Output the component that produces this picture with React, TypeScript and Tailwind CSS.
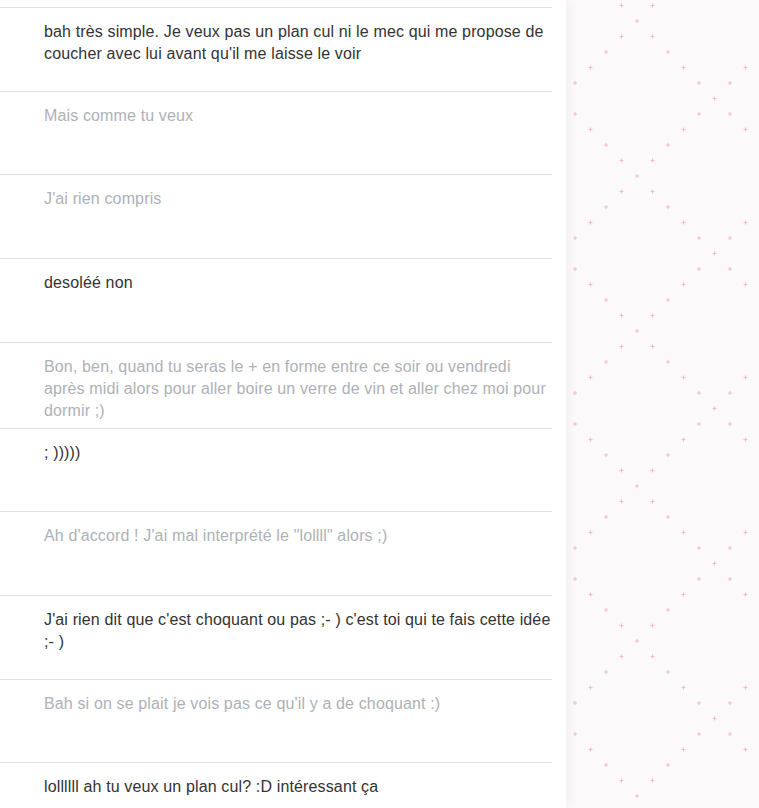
import React from 'react';

interface Message {
  text: string;
  mine: boolean;
}

const messages: Message[] = [
  { text: "bah très simple. Je veux pas un plan cul ni le mec qui me propose de coucher avec lui avant qu'il me laisse le voir", mine: true },
  { text: 'Mais comme tu veux', mine: false },
  { text: "J'ai rien compris", mine: false },
  { text: 'desoléé non', mine: true },
  { text: 'Bon, ben, quand tu seras le + en forme entre ce soir ou vendredi après midi alors pour aller boire un verre de vin et aller chez moi pour dormir ;)', mine: false },
  { text: '; )))))', mine: true },
  { text: 'Ah d\'accord ! J\'ai mal interprété le "lollll" alors ;)', mine: false },
  { text: "J'ai rien dit que c'est choquant ou pas ;- ) c'est toi qui te fais cette idée ;- )", mine: true },
  { text: "Bah si on se plait je vois pas ce qu'il y a de choquant :)", mine: false },
  { text: 'lollllll ah tu veux un plan cul? :D intéressant ça', mine: true },
];

// dots along both diagonals of a 155px tile
const STEP = 15.5;
const dots: [number, number][] = [];
for (let t = 1; t < 10; t++) {
  dots.push([t * STEP, t * STEP]);
  if (t !== 5) dots.push([155 - t * STEP, t * STEP]);
}
dots.push([0, 0], [155, 0], [0, 155], [155, 155]);

const Pattern = () => (
  <svg className="absolute inset-0 h-full w-full" xmlns="http://www.w3.org/2000/svg">
    <defs>
      <pattern id="dots" x="71" y="21" width="155" height="155" patternUnits="userSpaceOnUse">
        {dots.map(([x, y], i) => (
          <path
            key={i}
            d={`M${x - 2} ${y}h4M${x} ${y - 2}v4`}
            stroke="#f2bccb"
            strokeWidth="1.1"
          />
        ))}
      </pattern>
    </defs>
    <rect width="100%" height="100%" fill="url(#dots)" />
  </svg>
);

const App = () => {
  return (
    <div className="flex h-[808px] w-full overflow-hidden bg-[#fcf9fa] font-['Liberation_Sans',Arial,sans-serif]">
      {/* Message list */}
      <div className="relative z-10 w-[566px] shrink-0 bg-white pt-[7px] shadow-[2px_0_10px_rgba(0,0,0,0.05)]">
        {messages.map((m, i) => (
          <div key={i} className="w-[552px] border-t border-[#e2e2e2] pl-[44px] pt-[13px] pb-[6px]">
            <p
              className={`min-h-[63.67px] text-[16px] leading-[22px] tracking-[0.14px] ${
                m.mine ? 'text-[#333333]' : 'text-[#aeb1b6]'
              }`}
            >
              {m.text}
            </p>
          </div>
        ))}
      </div>

      {/* Decorative side */}
      <div className="relative flex-1">
        <Pattern />
      </div>
    </div>
  );
};

export default App;
